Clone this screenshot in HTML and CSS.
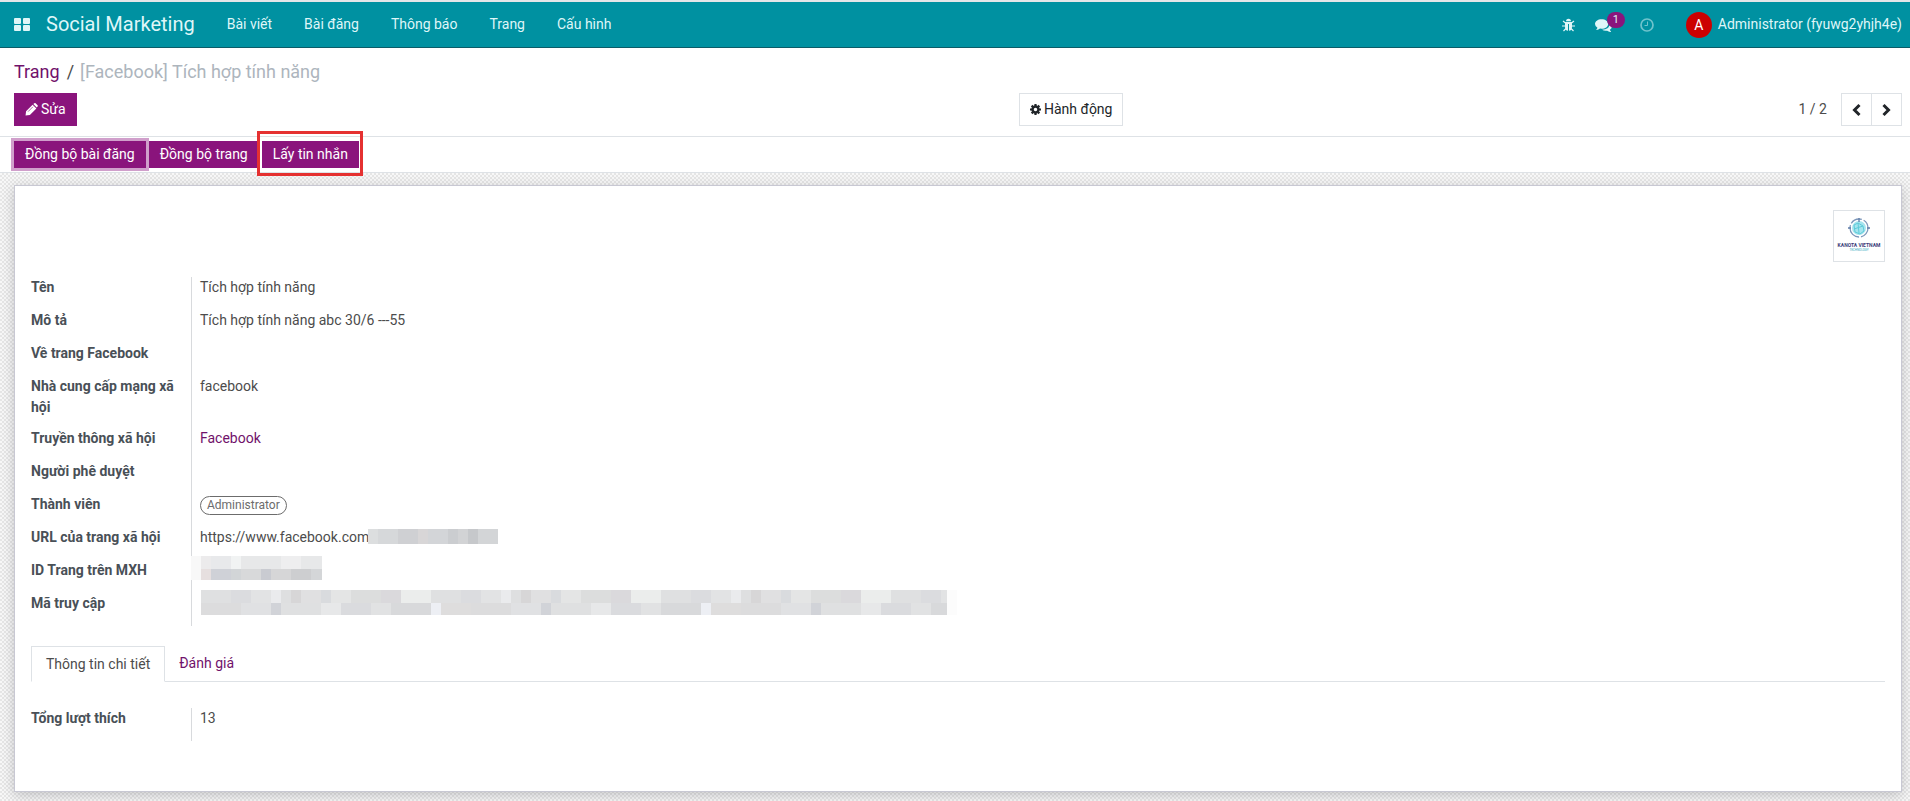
FILE: index.html
```html
<!DOCTYPE html>
<html lang="vi">
    <head>
        <meta charset="UTF-8" />
        <title>Social Marketing</title>
        <link rel="stylesheet" href="styles.css">
    </head>
    <body>
        <header class="navbar">
            <button class="apps-btn" aria-label="Apps">
                <svg width="16" height="14" viewBox="0 0 16 14"><path fill="currentColor" d="M1 0h5q1 0 1 1v4q0 1-1 1H1Q0 6 0 5V1q0-1 1-1zM10 0h5q1 0 1 1v4q0 1-1 1h-5q-1 0-1-1V1q0-1 1-1zM1 7h5q1 0 1 1v4q0 1-1 1H1q-1 0-1-1V8q0-1 1-1zM10 7h5q1 0 1 1v4q0 1-1 1h-5q-1 0-1-1V8q0-1 1-1z"/></svg>
            </button>
            <a href="#" class="brand">Social Marketing</a>
            <nav class="menu">
                <a href="#">Bài viết</a>
                <a href="#">Bài đăng</a>
                <a href="#">Thông báo</a>
                <a href="#">Trang</a>
                <a href="#">Cấu hình</a>
            </nav>
            <div class="systray">
                <button aria-label="Debug">
                    <svg width="13" height="14" viewBox="0 0 13 14"><g fill="none" stroke="currentColor" stroke-width="1.200"><path d="M1 3l2.500 2M12 3L9.500 5M0 8h3M13 8h-3M1.500 13L4 10.500M11.500 13L9 10.500"/></g><path fill="currentColor" d="M4 3.200a2.500 2.500 0 0 1 5 0zM3 4h7v5q0 3.500-3 3.800V6H6v6.800Q3 12.500 3 9z"/></svg>
                </button>
                <button class="messages" aria-label="Messages">
                    <svg width="17" height="14" viewBox="0 0 16 13"><path fill="currentColor" d="M6.200 1C9.700 1 12.400 3 12.400 5.500S9.700 10 6.200 10q-.8 0-1.500-.1Q3.300 11 1.500 11.200q-.5 0-.2-.4Q2 10 2.300 9 0 7.700 0 5.500C0 3 2.700 1 6.200 1zM13.500 4.200Q16 5.500 16 7.600q0 2-2 3.300.3 1 1 1.800.3.500-.2.500-1.800-.3-3.300-1.400-2.700.5-4.900-.8 6.700-.3 7-5 0-1-.1-1.800z"/></svg>
                    <span class="badge">1</span>
                </button>
                <button class="activity" aria-label="Activities">
                    <svg width="14" height="14" viewBox="0 0 14 14"><g fill="none" stroke="currentColor"><circle cx="7" cy="7" r="6" stroke-width="1.700"/><path d="M7.500 3.500v4H4.500"/></g></svg>
                </button>
                <button class="user"><span class="avatar">A</span>Administrator (fyuwg2yhjh4e)</button>
            </div>
        </header>

        <div class="control-panel">
            <div class="breadcrumb">
                <a href="#">Trang</a><span class="slash">/</span><span class="active">[Facebook] Tích hợp tính năng</span>
            </div>
            <div class="cp-row">
                <div class="cp-left">
                    <button class="btn btn-primary">
                        <svg width="13" height="13" viewBox="0 0 12 12"><path fill="currentColor" d="M1 7.500L7 1.500l3.500 3.500-6 6L.500 11.500zM7.700 1l.9-.7q.6-.5 1.200 0l1.800 1.800q.5.600 0 1.200l-.8.9z"/><path stroke="#8a147c" stroke-width=".6" d="M2.800 8L7.300 3.500"/></svg>
                        Sửa
                    </button>
                </div>
                <div class="cp-right">
                    <button class="btn btn-light">
                        <svg width="11" height="11" viewBox="0 0 10 10"><circle cx="5" cy="5" r="2.700" fill="none" stroke="currentColor" stroke-width="2.200"/><path stroke="currentColor" stroke-width="2" d="M5 0v2M5 8v2M0 5h2M8 5h2M1.500 1.500l1.200 1.200M7.300 7.300l1.200 1.200M8.500 1.500L7.300 2.700M2.700 7.300L1.500 8.500"/></svg>
                        Hành động
                    </button>
                    <div class="pager">
                        <span>1 / 2</span>
                        <div class="pager-btns">
                            <button class="btn btn-light" aria-label="Previous"><svg width="9" height="14" viewBox="0 0 9 14"><path d="M7.500 2l-5 5 5 5" fill="none" stroke="currentColor" stroke-width="3"/></svg></button>
                            <button class="btn btn-light" aria-label="Next"><svg width="9" height="14" viewBox="0 0 9 14"><path d="M1.500 2l5 5-5 5" fill="none" stroke="currentColor" stroke-width="3"/></svg></button>
                        </div>
                    </div>
                </div>
            </div>
        </div>

        <div class="statusbar">
            <button class="btn btn-primary focused">Đồng bộ bài đăng</button>
            <button class="btn btn-primary">Đồng bộ trang</button>
            <div class="highlight">
                <button class="btn btn-primary">Lấy tin nhắn</button>
            </div>
        </div>

        <main class="form-view">
            <div class="sheet">
                <div class="logo">
                    <svg viewBox="0 0 50 50" role="img" aria-label="Kanota Vietnam">
                        <circle cx="25" cy="17" r="7" fill="#a5e4ef"/>
                        <circle cx="25" cy="17" r="9" fill="none" stroke="#7d97ba" stroke-width="1.300" stroke-dasharray="12 2 17 2"/>
                        <path d="M20 14l4-2 5 3 1 5-4 3-5-2zM24 12l1 10M20 18l9-3" fill="none" stroke="#5ccbd9"/>
                        <path d="M25 7v4M33 17h3M14 17h3" stroke="#5f7ca8" stroke-width="1.300"/>
                        <text x="25" y="36" class="logo-name">KANOTA VIETNAM</text>
                        <text x="25" y="40" class="logo-sub">TECHNOLOGY</text>
                    </svg>
                </div>
                <dl class="group">
                    <dt>Tên</dt>
                    <dd>Tích hợp tính năng</dd>
                    <dt>Mô tả</dt>
                    <dd>Tích hợp tính năng abc 30/6 ---55</dd>
                    <dt>Về trang Facebook</dt>
                    <dd></dd>
                    <dt>Nhà cung cấp mạng xã hội</dt>
                    <dd>facebook</dd>
                    <dt>Truyền thông xã hội</dt>
                    <dd><a href="#">Facebook</a></dd>
                    <dt>Người phê duyệt</dt>
                    <dd></dd>
                    <dt>Thành viên</dt>
                    <dd><span class="tag">Administrator</span></dd>
                    <dt>URL của trang xã hội</dt>
                    <dd class="masked-row">https://www.facebook.com<span class="mask mask-url"></span></dd>
                    <dt>ID Trang trên MXH</dt>
                    <dd class="masked-row"><span class="mask mask-id"></span></dd>
                    <dt>Mã truy cập</dt>
                    <dd class="masked-row"><span class="mask mask-token"></span></dd>
                </dl>
                <div class="tabs" role="tablist">
                    <button class="tab active" role="tab" aria-selected="true">Thông tin chi tiết</button>
                    <button class="tab" role="tab" aria-selected="false">Đánh giá</button>
                </div>
                <dl class="group">
                    <dt>Tổng lượt thích</dt>
                    <dd>13</dd>
                </dl>
            </div>
        </main>
    </body>
</html>
```
FILE: styles.css
```css
* {
    box-sizing: border-box;
}
body {
    margin: 0;
    min-height: 100vh;
    display: flex;
    flex-direction: column;
    font-family: Roboto, 'Noto Sans', sans-serif;
    font-size: 14px;
    line-height: 21px;
    color: #4c4c4c;
    background-color: #fff;
}
a {
    color: #71126b;
    text-decoration: none;
}
button {
    font: inherit;
    color: inherit;
    background: none;
    border: none;
    padding: 0;
    cursor: pointer;
}
svg {
    display: block;
}

/* Top bar */
.navbar {
    display: flex;
    align-items: center;
    height: 48px;
    padding: 0 8px 0 14px;
    border-top: 2px solid #e4e6e8;
    border-bottom: 1px solid #0b5c68;
    background-color: #0091a1;
    color: #dff6f8;
}
.navbar a {
    color: #dff6f8;
}
.brand {
    margin: 0 16px;
    font-size: 20px;
}
.menu {
    display: flex;
    margin-left: 16px;
    gap: 32px;
}
.systray {
    display: flex;
    align-items: center;
    margin-left: auto;
    gap: 20px;
}
.messages {
    position: relative;
    margin-right: 8px;
}
.badge {
    position: absolute;
    left: 12px;
    top: -6px;
    width: 18px;
    height: 16px;
    border-radius: 8px;
    background-color: #8a147c;
    font-size: 11px;
    line-height: 15px;
}
.activity {
    opacity: 0.5;
}
.user {
    display: flex;
    align-items: center;
    gap: 6px;
    margin-left: 12px;
}
.avatar {
    width: 26px;
    height: 26px;
    border-radius: 50%;
    background-color: #cc0000;
    color: #fff;
    line-height: 27px;
}

/* Control panel */
.control-panel {
    padding: 13px 8px 10px 14px;
    border-bottom: 1px solid #dee2e6;
}
.breadcrumb {
    display: flex;
    gap: 7px;
    margin-bottom: 11px;
    font-size: 18px;
}
.breadcrumb .active {
    margin-left: -1px;
    color: #adb5bd;
}
.cp-row {
    display: grid;
    grid-template-columns: 1fr 1fr;
}
.cp-right {
    display: flex;
    justify-content: space-between;
    padding-left: 61px;
}
.btn {
    display: inline-flex;
    align-items: center;
    gap: 3px;
    height: 33px;
    padding: 0 10px;
}
.btn-primary {
    background-color: #8a147c;
    color: #fff;
}
.btn-light {
    border: 1px solid #dee2e6;
    background-color: #fff;
    color: #212529;
}
.cp-left .btn {
    padding: 0 11px;
}
.pager {
    display: flex;
    align-items: center;
    gap: 14px;
}
.pager-btns {
    display: flex;
}
.pager-btns .btn + .btn {
    margin-left: -1px;
}
.pager-btns .btn {
    padding: 0 10px;
}

/* Status buttons */
.statusbar {
    display: flex;
    align-items: center;
    gap: 3px;
    height: 36px;
    padding: 0 14px;
    border-bottom: 1px solid #dee2e6;
}
.statusbar .btn {
    height: 27px;
    padding: 0 11px;
}
.focused {
    box-shadow: 0 0 0 3px #d09fcb;
}
.highlight {
    position: relative;
    display: flex;
}
/* red frame lies over the bar and its neighbours */
.highlight::after {
    content: '';
    position: absolute;
    inset: -10px -4px -8px -5px;
    border: 3px solid #e53131;
    pointer-events: none;
}

/* Form */
.form-view {
    flex: 1;
    display: flex;
    padding: 12px 8px 9px 14px;
    background: repeating-conic-gradient(#e6e6e6 0 25%, #f8f8f8 0 50%) 0 0 / 4px 4px;
}
.sheet {
    flex: 1;
    padding: 24px 16px;
    border: 1px solid #c8c8d3;
    background-color: #fff;
    box-shadow: 0 3px 12px rgba(50, 50, 60, 0.25);
}
.logo {
    width: 52px;
    height: 52px;
    margin: 0 0 15px auto;
    border: 1px solid #dee2e6;
}
.logo-name {
    fill: #3b3d78;
    font-size: 5px;
    font-weight: 700;
    text-anchor: middle;
}
.logo-sub {
    fill: #32a9bd;
    font-size: 3px;
    text-anchor: middle;
}
.group {
    display: grid;
    grid-template-columns: 161px 1fr;
    margin: 0;
}
.group dt {
    padding: 0 12px 10px 0;
    border-right: 1px solid #d8dadd;
    font-weight: 700;
    color: #495057;
}
.group dd {
    min-height: 33px;
    margin: 0;
    padding-left: 8px;
}
.tag {
    display: inline-block;
    padding: 0 6px;
    border: 1px solid #6c6c6c;
    border-radius: 10px;
    font-size: 12px;
    line-height: 17px;
    color: #6c6c6c;
}

/* Pixelated cover over private values */
.masked-row {
    display: flex;
    align-items: flex-start;
}
.mask {
    background-color: #dfe0e1;
}
.mask-url {
    width: 130px;
    height: 15px;
    margin-top: 2px;
    margin-left: -1px;
    background: linear-gradient(90deg, #dcdedf 0 10px, #d6d8da 0 30px, #cfd0d3 0 50px, #d8d6d7 0 60px, #d3d5d8 0 80px, #cbcdd0 0 90px, #d2d3d5 0 100px, #c6c8cb 0 110px, #d3d5d7 0);
}
.mask-id {
    width: 131px;
    height: 24px;
    margin: -4px 0 0 -9px;
    background:
        linear-gradient(90deg, #f8f8f8 0 10px, #ecebec 0 20px, #e8e9eb 0 40px, #f1f3f3 0 50px, #e7e8e9 0 90px, #eeeeef 0 110px, #e7e8e9 0) 0 0 / 100% 13px no-repeat,
        linear-gradient(90deg, #f8f8f8 0 10px, #e6dfdf 0 20px, #cfd1d7 0 40px, #d2d5d7 0 50px, #d8d9da 0 70px, #c9cbd1 0 80px, #d6d6d7 0 100px, #cdced0 0 120px, #d4d6d8 0);
}
.mask-token {
    width: 756px;
    height: 25px;
    margin: -3px 0 0 1px;
    background:
        linear-gradient(90deg, transparent 0 746px, #fcfcfc 0) 0 0 / 100% 25px no-repeat,
        repeating-linear-gradient(90deg, #dfe0e1 0 30px, #dbdcdf 0 50px, #e2e3e4 0 70px, #eaebed 0 80px, #dedfe0 0 90px, #d7d6d7 0 100px, #e0e0e1 0 120px, #d9dbde 0 130px, #e4e5e5 0 150px, #dcdddd 0 180px, #dad9dc 0 200px, #ebedec 0 230px) 0 0 / 100% 13px no-repeat,
        repeating-linear-gradient(90deg, #dcdcdd 0 40px, #e0e1e3 0 70px, #d1d3d8 0 80px, #dfe0e1 0 120px, #e7e8e9 0 140px, #dadbde 0 170px, #e1e2e3 0 190px, #d8d9db 0 230px, #edeff4 0 240px, #dedddd 0 270px);
}

/* Tabs */
.tabs {
    display: flex;
    margin: 20px 0 26px;
    border-bottom: 1px solid #dee2e6;
}
.tab {
    height: 35px;
    padding: 0 14px;
    color: #71126b;
}
.tab.active {
    height: 36px;
    margin-bottom: -1px;
    border: 1px solid #dee2e6;
    border-bottom-color: #fff;
    background-color: #fff;
    color: #4c4c4c;
}
```
